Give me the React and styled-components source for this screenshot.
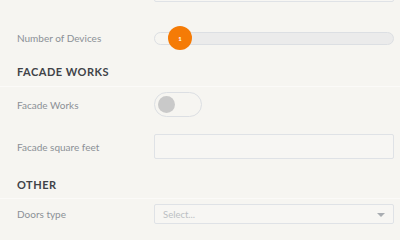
import React from "react";
import styled, { createGlobalStyle } from "styled-components";

const Global = createGlobalStyle`
  html, body { margin: 0; padding: 0; background: #f6f5f1; overflow: hidden; }
  body { font-family: Lato, "Open Sans", sans-serif; }
`;

const Form = styled.div`
  margin-top: -23px;
  padding: 0 6px 0 17px;
  display: flex;
  flex-direction: column;
`;

const Row = styled.div`
  display: grid;
  grid-template-columns: 137px 1fr;
  align-items: center;
  height: ${(p) => p.$h}px;
  margin-top: ${(p) => p.$mt || 0}px;
`;

const Label = styled.div`
  font-size: 10px;
  color: #8b9096;
  line-height: 12px;
  white-space: nowrap;
`;

const Input = styled.div`
  box-sizing: border-box;
  height: ${(p) => p.$h || 25}px;
  border: 1px solid #dfe2e6;
  border-radius: 2px;
  background: #f7f6f3;
`;

const SectionTitle = styled.div`
  margin-left: -17px;
  margin-right: -6px;
  padding: ${(p) => p.$pt}px 6px ${(p) => p.$pb}px 17px;
  font-size: 11px;
  line-height: 14px;
  font-weight: 700;
  letter-spacing: 0.5px;
  color: #404348;
  border-bottom: 1px solid #fbfaf8;
`;

const SliderTrack = styled.div`
  position: relative;
  box-sizing: border-box;
  height: 13px;
  border: 1px solid #dcdfe3;
  border-radius: 7px;
  background: linear-gradient(to right, #f6f5f1 0, #f6f5f1 25px, #ebebeb 25px);
`;

const Knob = styled.div`
  position: absolute;
  left: 13px;
  top: 50%;
  width: 24px;
  height: 24px;
  margin-top: -12px;
  border-radius: 50%;
  background: #f57b06;
  color: #fff;
  font-size: 6px;
  font-weight: 700;
  display: flex;
  align-items: center;
  justify-content: center;
`;

const Toggle = styled.div`
  box-sizing: border-box;
  width: 48px;
  height: 25px;
  border: 1px solid #dcdfe3;
  border-radius: 13px;
  display: flex;
  align-items: center;
  padding-left: 3px;
`;

const ToggleDot = styled.div`
  width: 17px;
  height: 17px;
  border-radius: 50%;
  background: #c9c9c9;
`;

const Select = styled(Input)`
  display: flex;
  align-items: center;
  justify-content: space-between;
  padding: 0 8px 0 8px;
  font-size: 9.5px;
  color: #bbbfc3;
`;

const Caret = styled.div`
  width: 0;
  height: 0;
  border-left: 4px solid transparent;
  border-right: 4px solid transparent;
  border-top: 4px solid #a9adb2;
  margin-top: 1px;
`;

export default function App() {
  return (
    <>
      <Global />
      <Form>
        <Row $h={25}>
          <Label>Window frames type</Label>
          <Input />
        </Row>
        <Row $h={24} $mt={24}>
          <Label>Number of Devices</Label>
          <SliderTrack>
            <Knob>1</Knob>
          </SliderTrack>
        </Row>
        <SectionTitle $pt={15} $pb={7}>FACADE WORKS</SectionTitle>
        <Row $h={25} $mt={5}>
          <Label>Facade Works</Label>
          <Toggle>
            <ToggleDot />
          </Toggle>
        </Row>
        <Row $h={25} $mt={17}>
          <Label>Facade square feet</Label>
          <Input />
        </Row>
        <SectionTitle $pt={19} $pb={6}>OTHER</SectionTitle>
        <Row $h={20} $mt={5}>
          <Label>Doors type</Label>
          <Select $h={20}>
            <span>Select...</span>
            <Caret />
          </Select>
        </Row>
      </Form>
    </>
  );
}
